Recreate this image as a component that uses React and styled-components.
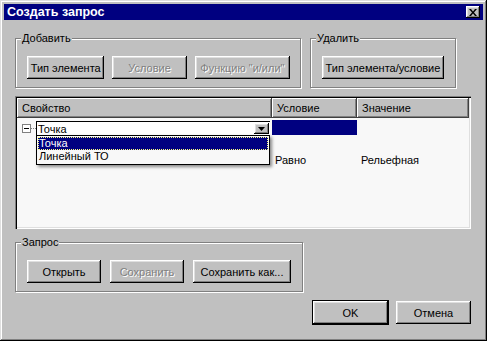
import styled, { createGlobalStyle } from "styled-components";

const GlobalStyle = createGlobalStyle`
  html, body {
    margin: 0;
    padding: 0;
    background: #c0c0c0;
  }
  body {
    font-family: "Liberation Sans", Arial, sans-serif;
    font-size: 11px;
    color: #000;
  }
`;

const raised = `
  box-shadow: inset -1px -1px #000, inset 1px 1px #fff, inset -2px -2px #808080, inset 2px 2px #dfdfdf;
`;

const Window = styled.div`
  width: 487px;
  height: 341px;
  box-sizing: border-box;
  padding: 4px;
  background: #c0c0c0;
  box-shadow: inset -1px -1px #000, inset 1px 1px #dfdfdf, inset -2px -2px #808080, inset 2px 2px #fff;
  display: flex;
  flex-direction: column;
`;

const TitleBar = styled.div`
  height: 16px;
  background: #000080;
  color: #fff;
  display: flex;
  align-items: center;
  justify-content: space-between;
  padding: 0 3px;
  font-weight: bold;
  font-size: 12.5px;
`;

const CloseButton = styled.button`
  width: 14px;
  height: 12px;
  padding: 0;
  border: none;
  background: #c0c0c0;
  display: flex;
  align-items: center;
  justify-content: center;
  ${raised}
`;

const Content = styled.div`
  flex: 1;
  display: flex;
  flex-direction: column;
  padding: 12px 12px 0 11px;
`;

const TopRow = styled.div`
  display: flex;
  gap: 9px;
`;

const Group = styled.fieldset`
  width: ${(p) => p.$w}px;
  box-sizing: border-box;
  margin: 0;
  min-width: 0;
  padding: 11px 10px 8px 11px;
  border: 1px solid #808080;
  box-shadow: 1px 1px 0 #fff, inset 1px 1px 0 #fff;
`;

const Legend = styled.legend`
  padding: 0 1px;
  margin-left: -6px;
  line-height: 13px;
  background: #c0c0c0;
`;

const ButtonRow = styled.div`
  display: flex;
  gap: ${(p) => p.$gap}px;
`;

const Button = styled.button`
  width: ${(p) => p.$w}px;
  height: ${(p) => (p.$default ? 25 : 23)}px;
  box-sizing: border-box;
  padding: 0;
  border: ${(p) => (p.$default ? "1px solid #000" : "none")};
  background: #c0c0c0;
  font-family: "Liberation Sans", Arial, sans-serif;
  font-size: 11px;
  color: #000;
  white-space: nowrap;
  ${raised}

  &:disabled {
    color: #808080;
    text-shadow: 1px 1px 0 #fff;
  }
`;

const Table = styled.div`
  position: relative;
  margin-top: 8px;
  height: 133px;
  box-sizing: border-box;
  padding: 2px;
  background: #f8f8f8;
  box-shadow: inset 1px 1px #808080, inset 2px 2px #000, inset -1px -1px #fff, inset -2px -2px #dfdfdf;
`;

const columns = "255px 85px 1fr";

const HeaderRow = styled.div`
  display: grid;
  grid-template-columns: ${columns};
  height: 20px;
`;

const HeaderCell = styled.div`
  background: #c0c0c0;
  padding-left: 5px;
  line-height: 20px;
  box-shadow: inset -1px -1px #404040, inset 1px 1px #fff, inset -2px -2px #808080;
`;

const Rows = styled.div`
  padding-top: 2px;
`;

const Row = styled.div`
  display: grid;
  grid-template-columns: ${columns};
  height: 16px;
  align-items: center;
`;

const Cell = styled.div`
  padding-left: ${(p) => p.$pad || 0}px;
  white-space: nowrap;
`;

const PropertyCell = styled.div`
  display: flex;
  align-items: center;
  padding-left: 5px;
  height: 16px;
`;

const Connector = styled.div`
  width: 5px;
  border-top: 1px dotted #808080;
`;

const SelectedCell = styled.div`
  align-self: start;
  height: 15px;
  background: #000080;
`;

const Combo = styled.div`
  position: relative;
  width: 234px;
  height: 14px;
  box-sizing: border-box;
  display: flex;
  align-items: center;
  justify-content: space-between;
  background: #fff;
  border-top: 1px solid #000;
  border-left: 1px solid #000;
  padding: 0 1px 0 1px;
  font-size: 11px;
`;

const ComboArrow = styled.div`
  width: 15px;
  height: 11px;
  background: #c0c0c0;
  display: flex;
  align-items: center;
  justify-content: center;
  ${raised}
`;

const DropList = styled.ul`
  position: absolute;
  top: 13px;
  left: -1px;
  width: 234px;
  box-sizing: border-box;
  margin: 0;
  padding: 1px 1px;
  list-style: none;
  background: #f8f8f8;
  border: 1px solid #000;
  box-shadow: 2px 2px 3px rgba(0, 0, 0, 0.45);
  z-index: 2;
`;

const DropItem = styled.li`
  height: 13px;
  line-height: 13px;
  padding-left: 1px;
  background: ${(p) => (p.$selected ? "#000080" : "transparent")};
  color: ${(p) => (p.$selected ? "#fff" : "#000")};
  outline: ${(p) => (p.$selected ? "1px dotted #ffff80" : "none")};
  outline-offset: -1px;
`;

const QueryGroupWrap = styled.div`
  margin-top: 7px;
`;

const Footer = styled.div`
  display: flex;
  justify-content: flex-end;
  align-items: center;
  gap: 7px;
  margin-top: 8px;
`;

const TreeToggle = () => (
  <svg width="9" height="9" viewBox="0 0 9 9">
    <rect x="0.5" y="0.5" width="8" height="8" fill="#fff" stroke="#808080" />
    <line x1="2" y1="4.5" x2="7" y2="4.5" stroke="#000" />
  </svg>
);

const ArrowDown = () => (
  <svg width="7" height="4" viewBox="0 0 7 4">
    <path d="M0 0h7L3.5 4z" fill="#000" />
  </svg>
);

const CloseIcon = () => (
  <svg width="8" height="7" viewBox="0 0 8 7">
    <path d="M0 0h2l2 2.5L6 0h2L5 3.5 8 7H6L4 4.5 2 7H0l3-3.5z" fill="#000" />
  </svg>
);

export default function App() {
  return (
    <>
      <GlobalStyle />
      <Window>
        <TitleBar>
          <span>Создать запрос</span>
          <CloseButton aria-label="Закрыть">
            <CloseIcon />
          </CloseButton>
        </TitleBar>
        <Content>
          <TopRow>
            <Group $w={286}>
              <Legend>Добавить</Legend>
              <ButtonRow $gap={8}>
                <Button $w={78}>Тип элемента</Button>
                <Button $w={75} disabled>Условие</Button>
                <Button $w={96} disabled>Функцию "и/или"</Button>
              </ButtonRow>
            </Group>
            <Group $w={146}>
              <Legend>Удалить</Legend>
              <Button $w={122}>Тип элемента/условие</Button>
            </Group>
          </TopRow>

          <Table>
            <HeaderRow>
              <HeaderCell>Свойство</HeaderCell>
              <HeaderCell>Условие</HeaderCell>
              <HeaderCell>Значение</HeaderCell>
            </HeaderRow>
            <Rows>
              <Row>
                <PropertyCell>
                  <TreeToggle />
                  <Connector />
                  <Combo>
                    <span>Точка</span>
                    <ComboArrow>
                      <ArrowDown />
                    </ComboArrow>
                    <DropList>
                      <DropItem $selected>Точка</DropItem>
                      <DropItem>Линейный ТО</DropItem>
                    </DropList>
                  </Combo>
                </PropertyCell>
                <SelectedCell />
                <Cell />
              </Row>
              <Row>
                <Cell />
                <Cell />
                <Cell />
              </Row>
              <Row>
                <Cell />
                <Cell $pad={3}>Равно</Cell>
                <Cell $pad={4}>Рельефная</Cell>
              </Row>
            </Rows>
          </Table>

          <QueryGroupWrap>
            <Group $w={288}>
              <Legend>Запрос</Legend>
              <ButtonRow $gap={9}>
                <Button $w={74}>Открыть</Button>
                <Button $w={74} disabled>Сохранить</Button>
                <Button $w={98}>Сохранить как...</Button>
              </ButtonRow>
            </Group>
          </QueryGroupWrap>

          <Footer>
            <Button $w={77} $default>OK</Button>
            <Button $w={75}>Отмена</Button>
          </Footer>
        </Content>
      </Window>
    </>
  );
}
